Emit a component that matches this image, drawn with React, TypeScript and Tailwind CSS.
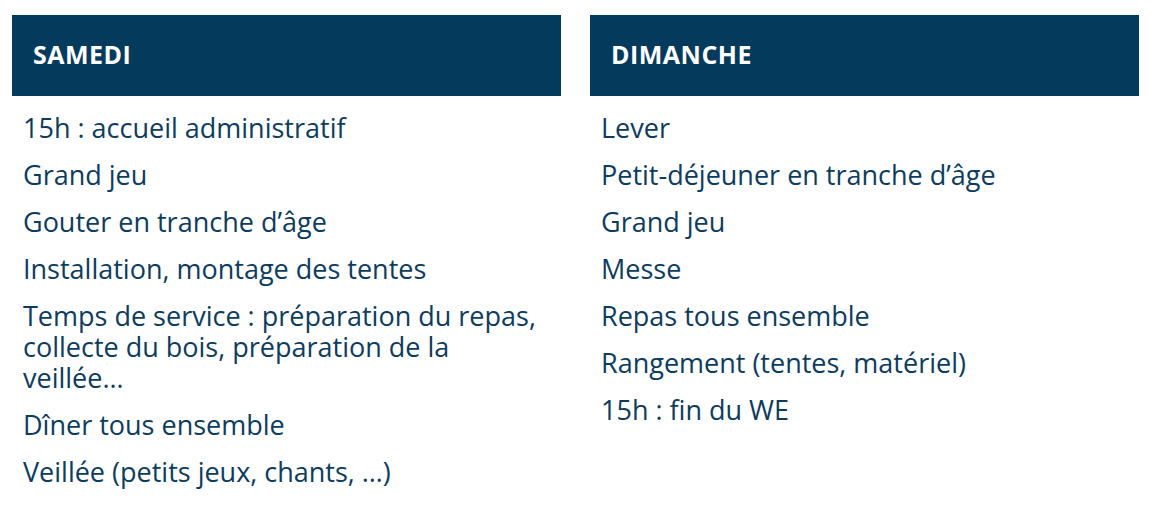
const samedi = [
  "15h : accueil administratif",
  "Grand jeu",
  "Gouter en tranche d’âge",
  "Installation, montage des tentes",
  "Temps de service : préparation du repas, collecte du bois, préparation de la veillée…",
  "Dîner tous ensemble",
  "Veillée (petits jeux, chants, …)",
];

const dimanche = [
  "Lever",
  "Petit-déjeuner en tranche d’âge",
  "Grand jeu",
  "Messe",
  "Repas tous ensemble",
  "Rangement (tentes, matériel)",
  "15h : fin du WE",
];

function DayColumn({ title, items }: { title: string; items: string[] }) {
  return (
    <div className="flex w-[549px] flex-col">
      <div className="flex h-[81px] items-center bg-[#043a5c] pb-[2px] pl-[21px]">
        <h2 className="font-['Open_Sans',sans-serif] text-[25px] font-bold tracking-[0.5px] text-white">
          {title}
        </h2>
      </div>
      <ul className="flex w-[531px] flex-col gap-4 pl-[11px] pt-4 font-['Open_Sans',sans-serif] text-[27px] leading-[31px] text-[#0d3c5e]">
        {items.map((item) => (
          <li key={item}>{item}</li>
        ))}
      </ul>
    </div>
  );
}

export default function App() {
  return (
    <div className="flex min-h-[517px] gap-[29px] bg-white px-3 pt-[15px]">
      <DayColumn title="SAMEDI" items={samedi} />
      <DayColumn title="DIMANCHE" items={dimanche} />
    </div>
  );
}
